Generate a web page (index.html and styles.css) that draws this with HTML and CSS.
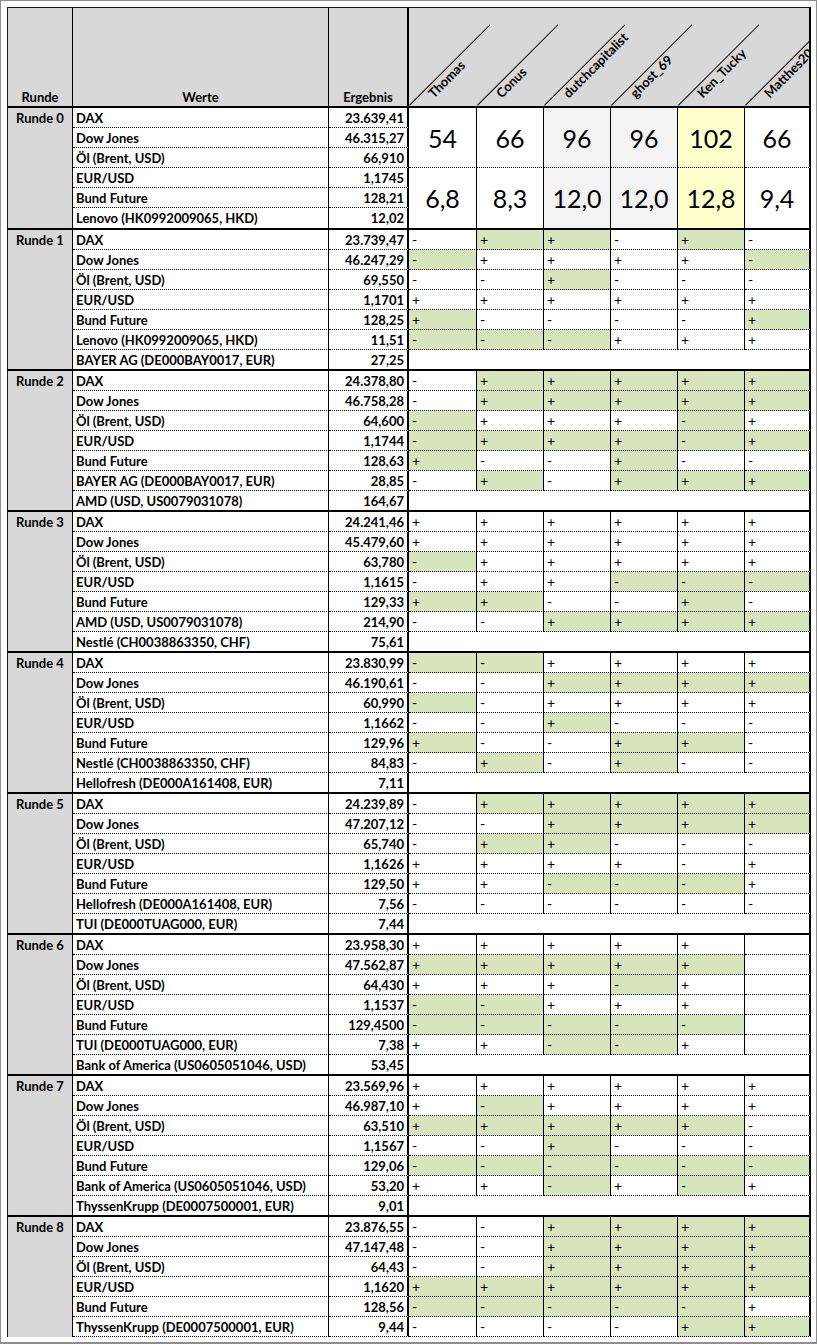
FILE: index.html
```html
<!DOCTYPE html>
<html lang="de">
<head>
<meta charset="utf-8">
<title>Börsenspiel</title>
<link rel="stylesheet" href="styles.css">
</head>
<body>
<div class="frame">
<div class="clip">
<table>
<thead>
<tr class="head">
<th class="hr">Runde</th>
<th class="hw">Werte</th>
<th class="he">Ergebnis</th>
<th class="hp hp1"><div class="diag"><span>Thomas</span></div></th>
<th class="hp"><div class="diag"><span>Conus</span></div></th>
<th class="hp"><div class="diag"><span>dutchcapitalist</span></div></th>
<th class="hp"><div class="diag"><span>ghost_69</span></div></th>
<th class="hp"><div class="diag"><span>Ken_Tucky</span></div></th>
<th class="hp hp6"><div class="diag"><span>Matthes20</span></div></th>
</tr>
</thead>
<tbody>
<tr><td class="r" rowspan="6">Runde 0</td><td class="w">DAX</td><td class="e">23.639,41</td><td class="big" rowspan="3">54</td><td class="big" rowspan="3">66</td><td class="big gr" rowspan="3">96</td><td class="big gr" rowspan="3">96</td><td class="big ye" rowspan="3">102</td><td class="big pl" rowspan="3">66</td></tr>
<tr><td class="w">Dow Jones</td><td class="e">46.315,27</td></tr>
<tr><td class="w">Öl (Brent, USD)</td><td class="e">66,910</td></tr>
<tr><td class="w">EUR/USD</td><td class="e">1,1745</td><td class="big lb" rowspan="3">6,8</td><td class="big lb" rowspan="3">8,3</td><td class="big gr lb" rowspan="3">12,0</td><td class="big gr lb" rowspan="3">12,0</td><td class="big ye lb" rowspan="3">12,8</td><td class="big pl lb" rowspan="3">9,4</td></tr>
<tr><td class="w">Bund Future</td><td class="e">128,21</td></tr>
<tr class="last first"><td class="w">Lenovo (HK0992009065, HKD)</td><td class="e">12,02</td></tr>
</tbody>
<tbody>
<tr><td class="r" rowspan="7">Runde 1</td><td class="w">DAX</td><td class="e">23.739,47</td><td class="p">-</td><td class="p g">+</td><td class="p g">+</td><td class="p">-</td><td class="p g">+</td><td class="p pl">-</td></tr>
<tr><td class="w">Dow Jones</td><td class="e">46.247,29</td><td class="p g">-</td><td class="p">+</td><td class="p">+</td><td class="p">+</td><td class="p">+</td><td class="p pl g">-</td></tr>
<tr><td class="w">Öl (Brent, USD)</td><td class="e">69,550</td><td class="p">-</td><td class="p">-</td><td class="p g">+</td><td class="p">-</td><td class="p">-</td><td class="p pl">-</td></tr>
<tr><td class="w">EUR/USD</td><td class="e">1,1701</td><td class="p">+</td><td class="p">+</td><td class="p">+</td><td class="p">+</td><td class="p">+</td><td class="p pl">+</td></tr>
<tr><td class="w">Bund Future</td><td class="e">128,25</td><td class="p g">+</td><td class="p">-</td><td class="p">-</td><td class="p">-</td><td class="p">-</td><td class="p pl g">+</td></tr>
<tr><td class="w">Lenovo (HK0992009065, HKD)</td><td class="e">11,51</td><td class="p g">-</td><td class="p g">-</td><td class="p g">-</td><td class="p">+</td><td class="p">+</td><td class="p pl">+</td></tr>
<tr class="last"><td class="w">BAYER AG (DE000BAY0017, EUR)</td><td class="e">27,25</td><td class="m" colspan="6"></td></tr>
</tbody>
<tbody>
<tr><td class="r" rowspan="7">Runde 2</td><td class="w">DAX</td><td class="e">24.378,80</td><td class="p">-</td><td class="p g">+</td><td class="p g">+</td><td class="p g">+</td><td class="p g">+</td><td class="p pl g">+</td></tr>
<tr><td class="w">Dow Jones</td><td class="e">46.758,28</td><td class="p">-</td><td class="p g">+</td><td class="p g">+</td><td class="p g">+</td><td class="p g">+</td><td class="p pl g">+</td></tr>
<tr><td class="w">Öl (Brent, USD)</td><td class="e">64,600</td><td class="p g">-</td><td class="p">+</td><td class="p">+</td><td class="p">+</td><td class="p g">-</td><td class="p pl">+</td></tr>
<tr><td class="w">EUR/USD</td><td class="e">1,1744</td><td class="p g">-</td><td class="p g">+</td><td class="p g">+</td><td class="p g">+</td><td class="p g">-</td><td class="p pl g">+</td></tr>
<tr><td class="w">Bund Future</td><td class="e">128,63</td><td class="p g">+</td><td class="p">-</td><td class="p">-</td><td class="p g">+</td><td class="p">-</td><td class="p pl">-</td></tr>
<tr><td class="w">BAYER AG (DE000BAY0017, EUR)</td><td class="e">28,85</td><td class="p">-</td><td class="p g">+</td><td class="p">-</td><td class="p g">+</td><td class="p g">+</td><td class="p pl g">+</td></tr>
<tr class="last"><td class="w">AMD (USD, US0079031078)</td><td class="e">164,67</td><td class="m" colspan="6"></td></tr>
</tbody>
<tbody>
<tr><td class="r" rowspan="7">Runde 3</td><td class="w">DAX</td><td class="e">24.241,46</td><td class="p">+</td><td class="p">+</td><td class="p">+</td><td class="p">+</td><td class="p">+</td><td class="p pl">+</td></tr>
<tr><td class="w">Dow Jones</td><td class="e">45.479,60</td><td class="p">+</td><td class="p">+</td><td class="p">+</td><td class="p">+</td><td class="p">+</td><td class="p pl">+</td></tr>
<tr><td class="w">Öl (Brent, USD)</td><td class="e">63,780</td><td class="p g">-</td><td class="p">+</td><td class="p">+</td><td class="p">+</td><td class="p">+</td><td class="p pl">+</td></tr>
<tr><td class="w">EUR/USD</td><td class="e">1,1615</td><td class="p">-</td><td class="p">+</td><td class="p">+</td><td class="p g">-</td><td class="p g">-</td><td class="p pl g">-</td></tr>
<tr><td class="w">Bund Future</td><td class="e">129,33</td><td class="p g">+</td><td class="p g">+</td><td class="p">-</td><td class="p">-</td><td class="p g">+</td><td class="p pl">-</td></tr>
<tr><td class="w">AMD (USD, US0079031078)</td><td class="e">214,90</td><td class="p">-</td><td class="p">-</td><td class="p g">+</td><td class="p g">+</td><td class="p g">+</td><td class="p pl g">+</td></tr>
<tr class="last"><td class="w">Nestlé (CH0038863350, CHF)</td><td class="e">75,61</td><td class="m" colspan="6"></td></tr>
</tbody>
<tbody>
<tr><td class="r" rowspan="7">Runde 4</td><td class="w">DAX</td><td class="e">23.830,99</td><td class="p g">-</td><td class="p g">-</td><td class="p">+</td><td class="p">+</td><td class="p">+</td><td class="p pl">+</td></tr>
<tr><td class="w">Dow Jones</td><td class="e">46.190,61</td><td class="p">-</td><td class="p">-</td><td class="p g">+</td><td class="p g">+</td><td class="p g">+</td><td class="p pl g">+</td></tr>
<tr><td class="w">Öl (Brent, USD)</td><td class="e">60,990</td><td class="p g">-</td><td class="p">-</td><td class="p">+</td><td class="p">+</td><td class="p">+</td><td class="p pl">+</td></tr>
<tr><td class="w">EUR/USD</td><td class="e">1,1662</td><td class="p">-</td><td class="p">-</td><td class="p g">+</td><td class="p">-</td><td class="p">-</td><td class="p pl">-</td></tr>
<tr><td class="w">Bund Future</td><td class="e">129,96</td><td class="p g">+</td><td class="p">-</td><td class="p">-</td><td class="p g">+</td><td class="p g">+</td><td class="p pl">-</td></tr>
<tr><td class="w">Nestlé (CH0038863350, CHF)</td><td class="e">84,83</td><td class="p">-</td><td class="p g">+</td><td class="p">-</td><td class="p g">+</td><td class="p">-</td><td class="p pl">-</td></tr>
<tr class="last"><td class="w">Hellofresh (DE000A161408, EUR)</td><td class="e">7,11</td><td class="m" colspan="6"></td></tr>
</tbody>
<tbody>
<tr><td class="r" rowspan="7">Runde 5</td><td class="w">DAX</td><td class="e">24.239,89</td><td class="p">-</td><td class="p g">+</td><td class="p g">+</td><td class="p g">+</td><td class="p g">+</td><td class="p pl g">+</td></tr>
<tr><td class="w">Dow Jones</td><td class="e">47.207,12</td><td class="p">-</td><td class="p">-</td><td class="p g">+</td><td class="p g">+</td><td class="p g">+</td><td class="p pl g">+</td></tr>
<tr><td class="w">Öl (Brent, USD)</td><td class="e">65,740</td><td class="p">-</td><td class="p g">+</td><td class="p g">+</td><td class="p">-</td><td class="p">-</td><td class="p pl">-</td></tr>
<tr><td class="w">EUR/USD</td><td class="e">1,1626</td><td class="p">+</td><td class="p">+</td><td class="p">+</td><td class="p">+</td><td class="p">-</td><td class="p pl">+</td></tr>
<tr><td class="w">Bund Future</td><td class="e">129,50</td><td class="p">+</td><td class="p">+</td><td class="p g">-</td><td class="p g">-</td><td class="p g">-</td><td class="p pl">+</td></tr>
<tr><td class="w">Hellofresh (DE000A161408, EUR)</td><td class="e">7,56</td><td class="p">-</td><td class="p">-</td><td class="p">-</td><td class="p">-</td><td class="p">-</td><td class="p pl">-</td></tr>
<tr class="last"><td class="w">TUI (DE000TUAG000, EUR)</td><td class="e">7,44</td><td class="m" colspan="6"></td></tr>
</tbody>
<tbody>
<tr><td class="r" rowspan="7">Runde 6</td><td class="w">DAX</td><td class="e">23.958,30</td><td class="p">+</td><td class="p">+</td><td class="p">+</td><td class="p">+</td><td class="p">+</td><td class="p pl"></td></tr>
<tr><td class="w">Dow Jones</td><td class="e">47.562,87</td><td class="p g">+</td><td class="p g">+</td><td class="p g">+</td><td class="p g">+</td><td class="p g">+</td><td class="p pl"></td></tr>
<tr><td class="w">Öl (Brent, USD)</td><td class="e">64,430</td><td class="p">+</td><td class="p">+</td><td class="p">+</td><td class="p g">-</td><td class="p">+</td><td class="p pl"></td></tr>
<tr><td class="w">EUR/USD</td><td class="e">1,1537</td><td class="p g">-</td><td class="p g">-</td><td class="p">+</td><td class="p">+</td><td class="p">+</td><td class="p pl"></td></tr>
<tr><td class="w">Bund Future</td><td class="e">129,4500</td><td class="p g">-</td><td class="p g">-</td><td class="p g">-</td><td class="p g">-</td><td class="p g">-</td><td class="p pl"></td></tr>
<tr><td class="w">TUI (DE000TUAG000, EUR)</td><td class="e">7,38</td><td class="p">+</td><td class="p">+</td><td class="p g">-</td><td class="p g">-</td><td class="p">+</td><td class="p pl"></td></tr>
<tr class="last"><td class="w">Bank of America (US0605051046, USD)</td><td class="e">53,45</td><td class="m" colspan="6"></td></tr>
</tbody>
<tbody>
<tr><td class="r" rowspan="7">Runde 7</td><td class="w">DAX</td><td class="e">23.569,96</td><td class="p">+</td><td class="p">+</td><td class="p">+</td><td class="p">+</td><td class="p">+</td><td class="p pl">+</td></tr>
<tr><td class="w">Dow Jones</td><td class="e">46.987,10</td><td class="p">+</td><td class="p g">-</td><td class="p">+</td><td class="p">+</td><td class="p">+</td><td class="p pl">+</td></tr>
<tr><td class="w">Öl (Brent, USD)</td><td class="e">63,510</td><td class="p g">+</td><td class="p g">+</td><td class="p g">+</td><td class="p g">+</td><td class="p g">+</td><td class="p pl">-</td></tr>
<tr><td class="w">EUR/USD</td><td class="e">1,1567</td><td class="p">-</td><td class="p">-</td><td class="p g">+</td><td class="p">-</td><td class="p">-</td><td class="p pl">-</td></tr>
<tr><td class="w">Bund Future</td><td class="e">129,06</td><td class="p g">-</td><td class="p g">-</td><td class="p g">-</td><td class="p g">-</td><td class="p g">-</td><td class="p pl g">-</td></tr>
<tr><td class="w">Bank of America (US0605051046, USD)</td><td class="e">53,20</td><td class="p">+</td><td class="p">+</td><td class="p g">-</td><td class="p">+</td><td class="p g">-</td><td class="p pl">+</td></tr>
<tr class="last"><td class="w">ThyssenKrupp (DE0007500001, EUR)</td><td class="e">9,01</td><td class="m" colspan="6"></td></tr>
</tbody>
<tbody>
<tr><td class="r open" rowspan="6">Runde 8</td><td class="w">DAX</td><td class="e">23.876,55</td><td class="p">-</td><td class="p">-</td><td class="p g">+</td><td class="p g">+</td><td class="p g">+</td><td class="p pl g">+</td></tr>
<tr><td class="w">Dow Jones</td><td class="e">47.147,48</td><td class="p">-</td><td class="p">-</td><td class="p g">+</td><td class="p g">+</td><td class="p g">+</td><td class="p pl g">+</td></tr>
<tr><td class="w">Öl (Brent, USD)</td><td class="e">64,43</td><td class="p">-</td><td class="p">-</td><td class="p g">+</td><td class="p g">+</td><td class="p g">+</td><td class="p pl g">+</td></tr>
<tr><td class="w">EUR/USD</td><td class="e">1,1620</td><td class="p g">+</td><td class="p g">+</td><td class="p g">+</td><td class="p g">+</td><td class="p g">+</td><td class="p pl g">+</td></tr>
<tr><td class="w">Bund Future</td><td class="e">128,56</td><td class="p g">-</td><td class="p g">-</td><td class="p g">-</td><td class="p g">-</td><td class="p g">-</td><td class="p pl">+</td></tr>
<tr><td class="w">ThyssenKrupp (DE0007500001, EUR)</td><td class="e">9,44</td><td class="p">-</td><td class="p">-</td><td class="p">-</td><td class="p">-</td><td class="p g">+</td><td class="p pl g">+</td></tr>
</tbody>
</table>
</div>
</div>
</body>
</html>
```
FILE: styles.css
```css
html, body {
  margin: 0;
  padding: 0;
  background: #ffffff;
}

.frame {
  width: 817px;
  height: 1344px;
  box-sizing: border-box;
  border: 1px solid #8e8e8e;
  border-bottom-width: 2px;
  padding: 6px 0 0 6px;
  overflow: hidden;
  background: #ffffff;
}

.clip {
  width: 804px;
  overflow: hidden;
}

table {
  width: 804px;
  table-layout: fixed;
  border-collapse: separate;
  border-spacing: 0;
  font-family: Lato, "Open Sans", "Liberation Sans", sans-serif;
  font-size: 13px;
  color: #000000;
}

th, td {
  padding: 0;
  border: 0;
  box-sizing: border-box;
  white-space: nowrap;
}

/* header */
.head {
  height: 101px;
}

th {
  background: #d8d8d8;
  border-top: 1px solid #1a1a1a;
  border-bottom: 2px solid #000000;
  vertical-align: bottom;
  font-weight: bold;
  line-height: 16px;
  padding-bottom: 1px;
  text-align: center;
}

.hr {
  width: 66px;
  border-left: 1px solid #1a1a1a;
  border-right: 1px solid #000000;
}

.hw {
  width: 256px;
  border-right: 1px solid #000000;
}

.he {
  width: 80px;
  border-right: 2px solid #000000;
}

.hp {
  width: 67px;
  text-align: left;
  padding-bottom: 0;
}

.hp1 {
  width: 68px;
}

.hp6 {
  width: 66px;
  border-right: 2px solid #000000;
}

.diag {
  box-sizing: border-box;
  width: 114px;
  height: 1px;
  border-top: 1px solid #000000;
  transform-origin: 0 0;
  transform: rotate(-45deg);
  padding-left: 22px;
  line-height: 14px;
  font-size: 13px;
  font-weight: bold;
  white-space: nowrap;
}

.diag span {
  display: block;
}

/* body */
tbody tr {
  height: 20px;
}

tbody tr.last {
  height: 21px;
}

tbody tr.first {
  height: 22px;
}

td {
  border-bottom: 1px dotted #000000;
  border-right: 1px solid #000000;
  vertical-align: top;
  line-height: 18px;
  padding-top: 1px;
  overflow: hidden;
}

tr.last td {
  border-bottom: 2px solid #000000;
}

.r {
  background: #d8d8d8;
  border-left: 1px solid #1a1a1a;
  border-bottom: 2px solid #000000;
  text-align: center;
  font-weight: bold;
}

.r.open {
  border-bottom: 0;
}

.w {
  font-weight: bold;
  padding-left: 3px;
}

.e {
  font-weight: bold;
  text-align: right;
  padding-right: 3px;
  border-right: 2px solid #000000;
}

.p {
  padding-left: 3px;
  font-size: 14px;
}

.g {
  background: #d8e4bc;
}

.pl {
  border-right: 2px solid #000000;
}

.m {
  border-right: 2px solid #000000;
}

.big {
  font-size: 25px;
  line-height: 30px;
  text-align: center;
  vertical-align: middle;
  padding-top: 0;
}

.big.lb {
  border-bottom: 2px solid #000000;
}

.gr {
  background: #f3f3f3;
}

.ye {
  background: #ffffcc;
}
```
